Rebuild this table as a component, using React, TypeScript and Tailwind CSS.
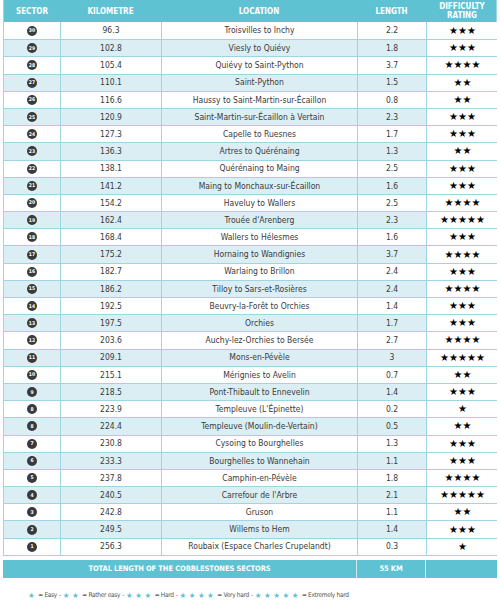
const rows: [number, string, string, string, number][] = [
  [30, "96.3", "Troisvilles to Inchy", "2.2", 3],
  [29, "102.8", "Viesly to Quiévy", "1.8", 3],
  [28, "105.4", "Quiévy to Saint-Python", "3.7", 4],
  [27, "110.1", "Saint-Python", "1.5", 2],
  [26, "116.6", "Haussy to Saint-Martin-sur-Écaillon", "0.8", 2],
  [25, "120.9", "Saint-Martin-sur-Écaillon à Vertain", "2.3", 3],
  [24, "127.3", "Capelle to Ruesnes", "1.7", 3],
  [23, "136.3", "Artres to Quérénaing", "1.3", 2],
  [22, "138.1", "Quérénaing to Maing", "2.5", 3],
  [21, "141.2", "Maing to Monchaux-sur-Écaillon", "1.6", 3],
  [20, "154.2", "Haveluy to Wallers", "2.5", 4],
  [19, "162.4", "Trouée d'Arenberg", "2.3", 5],
  [18, "168.4", "Wallers to Hélesmes", "1.6", 3],
  [17, "175.2", "Hornaing to Wandignies", "3.7", 4],
  [16, "182.7", "Warlaing to Brillon", "2.4", 3],
  [15, "186.2", "Tilloy to Sars-et-Rosières", "2.4", 4],
  [14, "192.5", "Beuvry-la-Forêt to Orchies", "1.4", 3],
  [13, "197.5", "Orchies", "1.7", 3],
  [12, "203.6", "Auchy-lez-Orchies to Bersée", "2.7", 4],
  [11, "209.1", "Mons-en-Pévèle", "3", 5],
  [10, "215.1", "Mérignies to Avelin", "0.7", 2],
  [9, "218.5", "Pont-Thibault to Ennevelin", "1.4", 3],
  [8, "223.9", "Templeuve (L'Épinette)", "0.2", 1],
  [8, "224.4", "Templeuve (Moulin-de-Vertain)", "0.5", 2],
  [7, "230.8", "Cysoing to Bourghelles", "1.3", 3],
  [6, "233.3", "Bourghelles to Wannehain", "1.1", 3],
  [5, "237.8", "Camphin-en-Pévèle", "1.8", 4],
  [4, "240.5", "Carrefour de l'Arbre", "2.1", 5],
  [3, "242.8", "Gruson", "1.1", 2],
  [2, "249.5", "Willems to Hem", "1.4", 3],
  [1, "256.3", "Roubaix (Espace Charles Crupelandt)", "0.3", 1],
];

const font = {
  fontFamily: "'Liberation Sans Narrow', 'DejaVu Sans Condensed', 'Roboto Condensed', 'Liberation Sans', sans-serif",
};
const starFont = { fontFamily: "'DejaVu Sans', sans-serif" };

const cols = "grid grid-cols-[56px_101px_196px_69px_72px]";

function SectorBadge({ n }: { n: number }) {
  return (
    <span className="flex h-[10px] w-[10px] items-center justify-center rounded-full bg-[#3a3a3a] text-[5px] font-bold leading-none text-white">
      {n}
    </span>
  );
}

function Stars({ count }: { count: number }) {
  return (
    <span className="text-[10px] leading-none text-black" style={starFont}>
      {"★".repeat(count)}
    </span>
  );
}

function Legend({ n, label, last }: { n: number; label: string; last?: boolean }) {
  return (
    <span className="flex items-center">
      <span className="mr-[1px] tracking-[2.5px] text-[7.5px] text-[#5ec2d3]" style={starFont}>
        {"★".repeat(n)}
      </span>
      <span>= {label}</span>
      {!last && <span className="mx-[2px]">-</span>}
    </span>
  );
}

export default function App() {
  return (
    <div className="h-[602px] w-[500px] bg-white px-[3px] text-[#3a3a3a]" style={font}>
      <div className="border-x border-b border-[#9fd5e2]">
        <div className={`${cols} h-[22px] bg-[#5ec2d3] text-[8px] font-bold uppercase leading-[9px] text-white`}>
          <div className="flex items-center justify-center">Sector</div>
          <div className="flex items-center justify-center">Kilometre</div>
          <div className="flex items-center justify-center">Location</div>
          <div className="flex items-center justify-center">Length</div>
          <div className="flex flex-col items-center justify-center text-center">
            <span>Difficulty</span>
            <span>Rating</span>
          </div>
        </div>
        {rows.map(([n, km, loc, len, stars], i) => {
          const bg = i % 2 === 1 ? "bg-[#dbeef4]" : "bg-white";
          return (
            <div
              key={km}
              className={`${cols} h-[17.2px] border-t border-[#9fd5e2] text-[8.5px] leading-none ${i === 0 ? "border-t-0" : ""}`}
            >
              <div className={`flex items-center justify-center ${bg}`}>
                <SectorBadge n={n} />
              </div>
              <div className={`flex items-center justify-center border-l border-[#9fd5e2] ${bg}`}>{km}</div>
              <div className={`flex items-center justify-center border-l border-[#9fd5e2] ${bg}`}>{loc}</div>
              <div className={`flex items-center justify-center border-l border-[#9fd5e2] ${bg}`}>{len}</div>
              <div className="flex items-center justify-center border-l border-[#9fd5e2] bg-white">
                <Stars count={stars} />
              </div>
            </div>
          );
        })}
      </div>
      <div className="mt-[4px] grid h-[18px] grid-cols-[353px_69px_72px] bg-[#5ec2d3] text-[7.5px] font-bold uppercase tracking-[-0.1px] text-white">
        <div className="flex items-center justify-center">Total length of the cobblestones sectors</div>
        <div className="flex items-center justify-center border-l border-white/70">55 km</div>
        <div className="border-l border-white/70" />
      </div>
      <div className="mt-[12px] flex items-center pl-[25px] text-[6.5px] tracking-[-0.3px] text-[#555]">
        <Legend n={1} label="Easy" />
        <Legend n={2} label="Rather easy" />
        <Legend n={3} label="Hard" />
        <Legend n={4} label="Very hard" />
        <Legend n={5} label="Extremely hard" last />
      </div>
    </div>
  );
}
